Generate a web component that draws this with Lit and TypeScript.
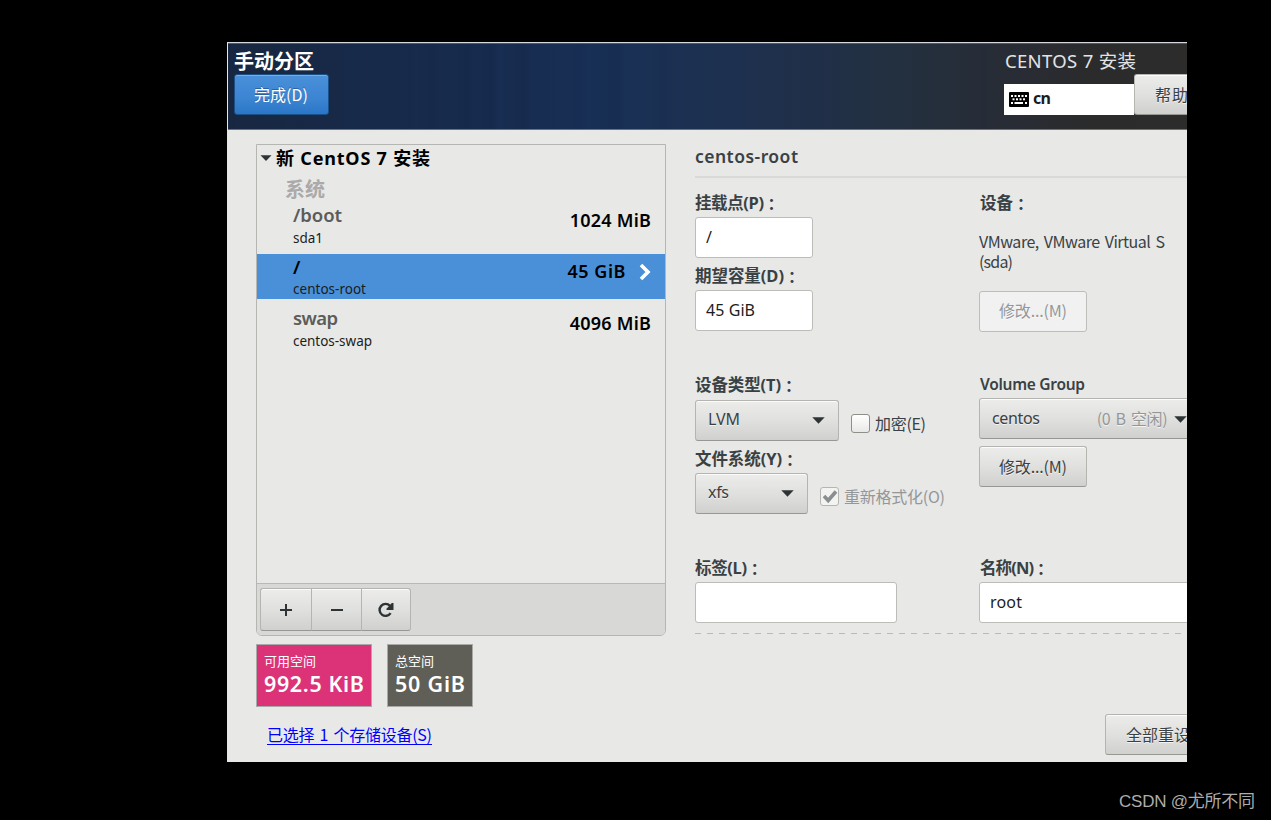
import { LitElement, html, css, svg } from "lit";
import { customElement, property } from "lit/decorators.js";

/** A single line of text tracked so that it occupies the given width. */
@customElement("fit-text")
class FitText extends LitElement {
  @property({ type: Number }) w = 0;
  @property() text = "";
  static styles = css`
    :host { display: block; white-space: pre; }
    span { display: inline-block; }
  `;
  render() {
    return html`<span>${this.text}</span>`;
  }
  updated() {
    const s = this.renderRoot.querySelector("span") as HTMLElement;
    s.style.letterSpacing = "0px";
    const n = [...this.text].length;
    if (this.w && n > 1) {
      s.style.letterSpacing = (this.w - s.getBoundingClientRect().width) / (n - 1) + "px";
    }
  }
}

const t = (text: string, w: number, cls = "") =>
  html`<fit-text class=${cls} .text=${text} .w=${w}></fit-text>`;

const label = (text: string, w: number) =>
  html`<div class="label">${t(text, w)}<span class="colon">：</span></div>`;

const arrow = html`<svg class="arrow" width="13" height="7" viewBox="0 0 13 7"><path d="M0.3 0.3H12.7L6.5 6.8Z" fill="#2e3436"/></svg>`;

const keyboard = html`<svg width="20" height="15" viewBox="0 0 20 15">
  <rect width="20" height="15" rx="1" fill="#000"/>
  ${[2, 5.5, 9, 12.5, 16].map((x) => svg`<rect x=${x} y="3" width="2" height="2" fill="#fff"/>`)}
  ${[3.5, 7, 10.5, 14].map((x) => svg`<rect x=${x} y="6.3" width="2" height="2" fill="#fff"/>`)}
  <rect x="2" y="10" width="2" height="2" fill="#fff"/>
  <rect x="5.5" y="10" width="8.5" height="2" fill="#fff"/>
  <rect x="16" y="10" width="2" height="2" fill="#fff"/>
</svg>`;

const mounts = [
  { name: "/boot", nw: 49, dev: "sda1", dw: 30, size: "1024 MiB", sw: 81, on: false },
  { name: "/", nw: 8, dev: "centos-root", dw: 73, size: "45 GiB", sw: 58, on: true },
  { name: "swap", nw: 45, dev: "centos-swap", dw: 79, size: "4096 MiB", sw: 81, on: false },
];

@customElement("app-root")
class AppRoot extends LitElement {
  static styles = css`
    :host {
      display: block; width: 1271px; height: 820px; overflow: hidden; background: #000;
      font: 16px/20px "Noto Sans", "Noto Sans CJK SC", sans-serif; color: #3a4144;
    }
    * { box-sizing: border-box; }
    svg { display: block; flex: none; }
    .window {
      margin: 42px 0 0 227px; width: 960px; height: 720px; overflow: hidden;
      background: #e8e8e6; border-top: 1px solid #d5d8dc; border-left: 1px solid #e4e6e8;
    }
    .banner {
      height: 87px; display: flex; justify-content: space-between; border-bottom: 1px solid #66728a;
      border-top: 1px solid #4a5874;
      background:
        linear-gradient(90deg, transparent 130px, #0b1e4018 180px, transparent 186px, #0b1e4022 205px, transparent 212px 225px, #0b1e4028 240px, transparent 247px, #0b1e4028 264px, #2450880c 272px, transparent 284px, #0b1e4024 296px, transparent 304px 340px, #0b1e4018 352px, transparent 362px, #0b1e4030 388px, transparent 398px 425px, #0b1e4020 434px, transparent 446px),
        linear-gradient(90deg, #182741 0, #172a4a 150px, #172c50 290px, #193056 380px, #1d3050 490px, #202f48 590px, #23303f 670px, #272c36 770px, #2b2b2c 860px, #2d2c2b 960px);
    }
    .title { color: #fff; font-size: 20px; font-weight: 700; line-height: 24px; margin: 6px 0 0 6px; }
    .cjk { font-family: "Noto Sans CJK SC", sans-serif; position: relative; top: -1px; }
    .wide { word-spacing: 2px; }
    .done {
      width: 95px; height: 41px; margin-left: 6px; border: 1px solid #1c5187; border-radius: 3px; color: #fff;
      background: linear-gradient(#4a90d9, #3c85d3 60%, #2a76c6); box-shadow: inset 0 1px #76aee6;
      padding: 10px 0 0 19px; text-shadow: 0 -1px #1c5187aa;
    }
    .right { width: 182px; }
    .product { font-size: 18.5px; line-height: 24px; color: #e2e3e5; margin: 5px 0 1px; }
    .tools { display: flex; margin-left: -1px; }
    .layout {
      width: 130px; height: 31px; margin-top: 10px; background: #fff; display: flex; flex: none;
      gap: 4px; padding: 4px 0 0 5px; color: #1c1c1c; font-weight: 700;
    }
    .layout svg { margin-top: 4px; }
    .btn {
      border: 1px solid #b4b4b1; border-bottom-color: #979794; border-radius: 3px; height: 41px; flex: none;
      background: linear-gradient(#ececeb, #e0e0de 50%, #d0d0ce); box-shadow: inset 0 1px #fbfbfb;
      text-shadow: 0 1px #ffffffb0; padding: 10px 0 0 19px;
    }
    .btn.off { background: #f1f1f1; color: #939799; border-color: #bdbdba; box-shadow: none; padding-top: 9px; }
    .help { width: 90px; padding: 10px 0 0 20px; }
    .main { display: flex; height: 507px; }
    .left { width: 410px; margin: 14px 0 0 28px; flex: none; }
    .list { height: 492px; border: 1px solid #b5b5b2; border-radius: 0 0 6px 6px; display: flex; flex-direction: column; }
    .group { display: flex; align-items: center; height: 25px; margin-bottom: 1px; padding-left: 3px; gap: 4px; color: #000; font-size: 18px; font-weight: 700; }
    .section { margin: 9px 0 2px 28px; font-size: 20px; font-weight: 700; color: #aaa; }
    .item { height: 45px; margin-bottom: 6.7px; padding: 3px 14px 0 36px; display: flex; justify-content: space-between; }
    .item .name { font-size: 18.5px; font-weight: 600; color: #5c5c5b; }
    .item .dev { font-size: 13.5px; color: #1c1c1c; margin-top: 2.6px; }
    .item .size { font-size: 18px; font-weight: 600; color: #000; margin-top: 4.5px; }
    .item.on { background: #4a90d9; }
    .item.on .name { color: #000; }
    .amount { display: flex; gap: 13px; }
    .amount svg { margin-top: 6px; }
    .bar { margin-top: auto; height: 52px; border-top: 1px solid #b8b8b5; background: #d8d8d6; padding: 4px 3px; border-radius: 0 0 5px 5px; display: flex; }
    .bar .btn { width: 51px; height: 43px; padding: 0; display: grid; place-items: center; border-radius: 0; border-right-width: 0; }
    .bar .btn:first-child { border-radius: 3px 0 0 3px; }
    .bar .btn:nth-child(2) { width: 50px; }
    .bar .btn:last-child { border-radius: 0 3px 3px 0; border-right-width: 1px; width: 50px; }
    .detail { margin: 16px 0 0 29px; width: 520px; flex: none; }
    .head { font-size: 17.5px; font-weight: 600; height: 32px; border-bottom: 2px solid #d9d9d7; }
    .cols { display: grid; grid-template-columns: 284px 236px; }
    .label { display: flex; font-weight: 700; height: 20px; font-size: 16.5px; }
    .c2 .label { padding-left: 1px; }
    .label.latin { font-size: 15.5px; font-weight: 600; }
    .colon { font-family: "Noto Sans CJK JP", sans-serif; font-size: 16px; }
    .c1, .c2 { padding-top: 15px; }
    .input { height: 41px; border: 1px solid #bcbcb9; border-radius: 3px; background: #fff; color: #1c1c1c; padding: 9px 0 0 10px; width: 118px; }
    .select { padding: 8px 13px 0 12px; display: flex; justify-content: space-between; }
    .select .arrow { margin-top: 8px; }
    .row { display: flex; gap: 12px; }
    .check { display: flex; gap: 5px; padding-top: 14px; }
    .box { width: 19px; height: 19px; border: 1px solid #8f8f88; border-radius: 3px; background: linear-gradient(#fff, #e8e8e7); }
    .dim { color: #939799; }
    .dim .box { border-color: #b5b5b2; background: #f3f3f2; }
    .dash { height: 1px; background: repeating-linear-gradient(90deg, #b9b9b6 0 6px, transparent 6px 12px); margin-top: 10px; }
    .foot { display: flex; justify-content: space-between; }
    .spaces { display: flex; gap: 15px; margin-left: 28px; padding-top: 7px; }
    .tile { height: 63px; border: 1px solid #aaa9a7; color: #fff; padding: 6px 0 0 7px; }
    .tile .cap { font-size: 13px; }
    .tile .num { font-size: 21.5px; font-weight: 600; line-height: 24px; margin-top: 1px; }
    .free { background: #dc3278; width: 116px; }
    .total { background: #5f5f57; width: 86px; }
    .link { color: #00f; width: 165px; margin: 18px 0 0 39px; height: 20px; border-bottom: 1px solid #00f; }
    .reset { width: 120px; margin: 77px -38px 0 0; padding-left: 20px; }
    .mark { margin: 28px 0 0 1119px; font: 17px/24px "Liberation Sans", "Noto Sans CJK SC", sans-serif; color: #adadad; }
  `;

  render() {
    return html`
      <div class="window">
        <div class="banner">
          <div>
            ${t("手动分区", 80, "title")}
            <div class="done">${t("完成(D)", 54, "cjk")}</div>
          </div>
          <div class="right">
            ${t("CENTOS 7 安装", 131, "product")}
            <div class="tools">
              <div class="layout">${keyboard}${t("cn", 18)}</div>
              <div class="btn help">${t("帮助", 33)}</div>
            </div>
          </div>
        </div>
        <div class="main">
          <div class="left">
            <div class="list">
              <div class="group">
                <svg width="12" height="6" viewBox="0 0 12 6"><path d="M0.5 0.3H11.5L6 6Z" fill="#2e3436"/></svg>
                ${t("新 CentOS 7 安装", 154)}
              </div>
              ${t("系统", 40, "section")}
              ${mounts.map((m) => html`
                <div class="item ${m.on ? "on" : ""}">
                  <div>${t(m.name, m.nw, "name")}${t(m.dev, m.dw, "dev")}</div>
                  <div class="amount">
                    ${t(m.size, m.sw, "size")}
                    ${m.on ? html`<svg width="12" height="18" viewBox="0 0 12 18"><path d="M2 2L9 9L2 16" fill="none" stroke="#fff" stroke-width="3.6"/></svg>` : ""}
                  </div>
                </div>`)}
              <div class="bar">
                <div class="btn"><svg width="14" height="14" viewBox="0 0 14 14"><path d="M7 1V13M1 7H13" stroke="#2e3436" stroke-width="2"/></svg></div>
                <div class="btn"><svg width="14" height="14" viewBox="0 0 14 14"><path d="M1 7H13" stroke="#2e3436" stroke-width="2"/></svg></div>
                <div class="btn"><svg width="18" height="16" viewBox="0 0 18 16"><path d="M13.6 11.2A6 6 0 1 1 13 3.8" fill="none" stroke="#2e3436" stroke-width="2.4"/><path d="M16.5 1V8H9.5V6.8L14.8 1Z" fill="#2e3436"/></svg></div>
              </div>
            </div>
          </div>
          <div class="detail">
            <div class="head">${t("centos-root", 103)}</div>
            <div class="cols">
              <div class="c1">
                ${label("挂载点(P)", 69)}
                <div class="input" style="margin-top:4px;margin-bottom:8px">${t("/", 0)}</div>
                ${label("期望容量(D)", 89)}
                <div class="input" style="margin-top:4px;margin-bottom:44px">${t("45 GiB", 49)}</div>
                ${label("设备类型(T)", 86)}
                <div class="row" style="margin-top:5px;margin-bottom:8px">
                  <div class="btn select" style="width:144px">${t("LVM", 32)}${arrow}</div>
                  <div class="check"><div class="box"></div>${t("加密(E)", 51, "cjk")}</div>
                </div>
                ${label("文件系统(Y)", 87)}
                <div class="row" style="margin-top:4px;margin-bottom:44px">
                  <div class="btn select" style="width:113px">${t("xfs", 21)}${arrow}</div>
                  <div class="check dim">
                    <div class="box"><svg width="17" height="17" viewBox="0 0 17 17"><path d="M3 8L7.2 12.5L15 3.5" fill="none" stroke="#8b8e8f" stroke-width="3.6"/></svg></div>
                    ${t("重新格式化(O)", 101, "cjk")}
                  </div>
                </div>
                ${label("标签(L)", 52)}
                <div class="input" style="margin-top:4px;width:202px"></div>
              </div>
              <div class="c2">
                ${label("设备", 33)}
                <div style="margin-top:19px">${t("VMware, VMware Virtual S", 186, "cjk wide")}${t("(sda)", 34, "cjk")}</div>
                <div class="btn off" style="width:108px;margin-top:19px;margin-bottom:42px">${t("修改...(M)", 68, "cjk")}</div>
                <div class="label latin">${t("Volume Group", 105)}</div>
                <div class="btn select" style="width:221px;margin-top:4px;margin-bottom:7px;padding-top:9px;justify-content:flex-start">
                  ${t("centos", 48)}
                  <div class="dim" style="margin-left:57px;margin-top:1px">${t("(0 B 空闲)", 71, "cjk wide")}</div>
                  <div style="margin-left:7px">${arrow}</div>
                </div>
                <div class="btn" style="width:108px;margin-bottom:71px">${t("修改...(M)", 68, "cjk")}</div>
                ${label("名称(N)", 54)}
                <div class="input" style="margin-top:4px;width:236px">${t("root", 32)}</div>
              </div>
            </div>
            <div class="dash"></div>
          </div>
        </div>
        <div class="foot">
          <div>
            <div class="spaces">
              <div class="tile free">${t("可用空间", 52, "cap")}${t("992.5 KiB", 100, "num")}</div>
              <div class="tile total">${t("总空间", 39, "cap")}${t("50 GiB", 70, "num")}</div>
            </div>
            <div class="link">${t("已选择 1 个存储设备(S)", 165, "cjk wide")}</div>
          </div>
          <div class="btn reset">${t("全部重设", 64, "cjk")}</div>
        </div>
      </div>
      <div class="mark">${t("CSDN @尤所不同", 136)}</div>
    `;
  }
}
